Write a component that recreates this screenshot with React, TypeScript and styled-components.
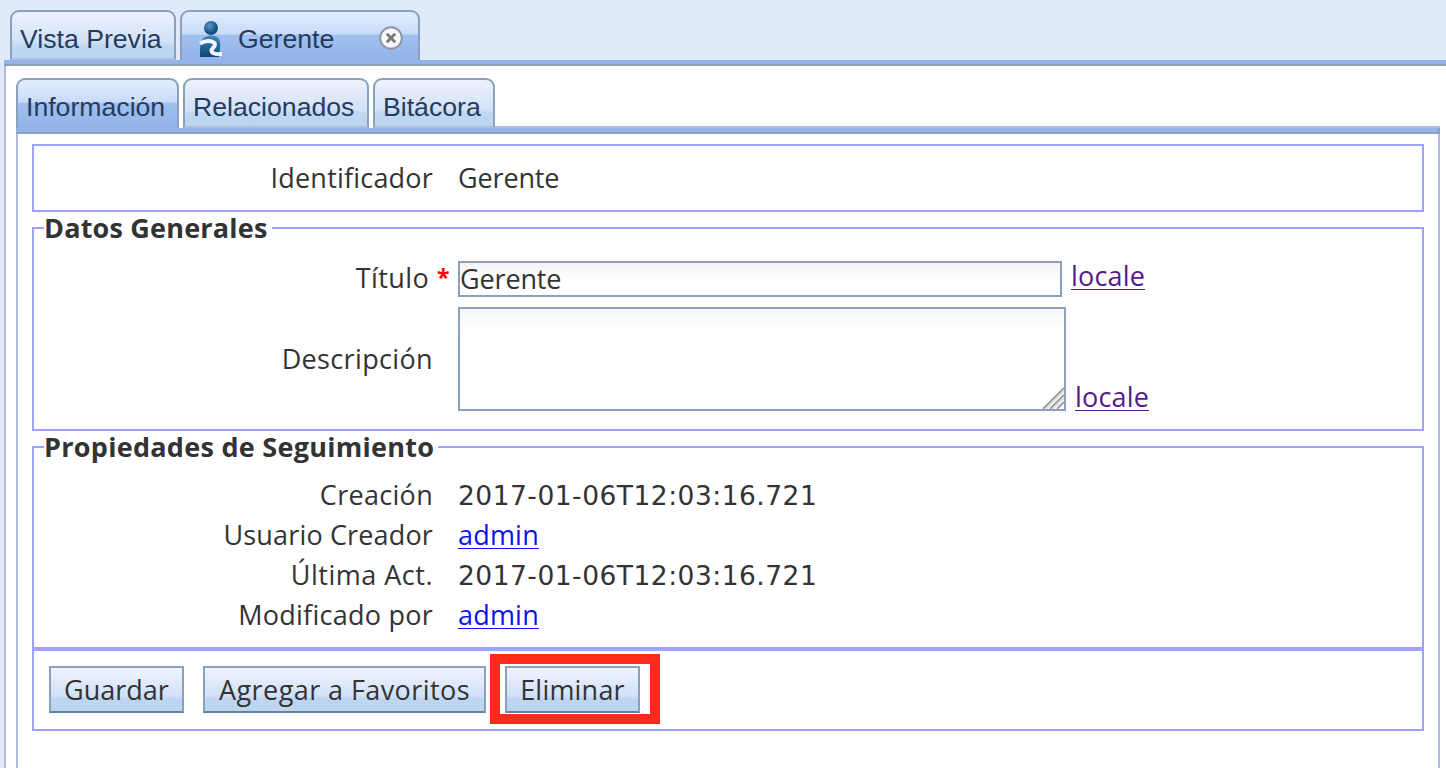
import React from "react";
import styled, { createGlobalStyle, css } from "styled-components";

const GlobalStyle = createGlobalStyle`
  html, body { margin: 0; padding: 0; }
  body {
    background: #e1eafb;
    color: #333;
    font-family: "Open Sans", "Noto Sans", sans-serif;
    font-size: 27px;
    line-height: 40px;
    overflow: hidden;
  }
  * { box-sizing: border-box; }
`;

const Page = styled.div`
  height: 768px;
  padding: 10px 0 0 4px;
  display: flex;
  flex-direction: column;
  overflow: hidden;
`;

const OuterTabs = styled.div`
  display: flex;
  gap: 4px;
  height: 50px;
  padding-left: 6px;
`;

const InnerTabs = styled.div`
  display: flex;
  gap: 4px;
  height: 50px;
`;

const Tab = styled.div<{ $active?: boolean; $width: number }>`
  display: flex;
  align-items: center;
  width: ${(p) => p.$width}px;
  height: 50px;
  padding: 7px 0 0 8px;
  border: 2px solid #8ba0bd;
  border-bottom: 2px solid #b0bbdf;
  border-radius: 9px 9px 0 0;
  background: linear-gradient(#edf2fe 0%, #d3e1f6 64%, #c0d8f0 72%, #b9d5ef 100%);
  color: #243c5f;
  font: 26.65px/34px "Liberation Sans", Arial, sans-serif;
  white-space: nowrap;
  ${(p) =>
    p.$active &&
    css`
      border-bottom: 0;
      padding-bottom: 2px;
      background: linear-gradient(#e3edfd 0%, #c8dbf9 46%, #a1c0ee 48%, #93b4ea 100%);
    `}
`;

const PersonIcon = styled.svg`
  margin: 0 15px 0 9px;
  flex: none;
`;

const CloseIcon = styled.svg`
  margin: -2px 0 0 44px;
  flex: none;
`;

const OuterPanel = styled.div`
  flex: 1;
  background: #fff;
  border-left: 2px solid #b0bbdf;
  padding: 12px 6px 0 10px;
  display: flex;
  flex-direction: column;
`;

const Strip = styled.div`
  flex: none;
  height: 6px;
  background: #94b3e6;
  border-bottom: 2px solid #8ba0bd;
`;

const InnerStrip = styled(Strip)`
  border-right: 2px solid #8ba0bd;
`;

const StripEdge = styled.div`
  flex: 1;
  margin-left: -4px;
  border-bottom: 2px solid #b0bbdf;
`;

const InnerPanel = styled.div`
  flex: 1;
  border: 2px solid #b0bbdf;
  border-width: 0 2px;
  padding: 10px 14px 0;
`;

const Group = styled.section<{ $height: number; $gap?: number; $pad?: number }>`
  height: ${(p) => p.$height}px;
  margin-top: ${(p) => p.$gap ?? 0}px;
  padding-top: ${(p) => p.$pad ?? 0}px;
  border: 2px solid #a0a0ff;
`;

const Legend = styled.h2<{ $width: number; $after: number; $ls: number }>`
  width: ${(p) => p.$width}px;
  height: 18px;
  margin: -10px 0 ${(p) => p.$after}px 10px;
  background: #fff;
  font-size: 27px;
  line-height: 18px;
  font-weight: 700;
  letter-spacing: ${(p) => p.$ls}px;
  white-space: nowrap;
`;

const Row = styled.div<{ $height?: number }>`
  display: flex;
  height: ${(p) => p.$height ?? 40}px;
  align-items: center;
`;

const Label = styled.label<{ $ls?: number; $required?: boolean }>`
  width: 424px;
  flex: none;
  padding-right: ${(p) => (p.$required ? 8 : 25)}px;
  text-align: right;
  letter-spacing: ${(p) => p.$ls ?? 0}px;
  ${(p) => p.$required && "margin-top: -2px;"}
`;

const Required = styled.em`
  color: #f00;
  font-style: normal;
  font-weight: 700;
  font-size: 23px;
  line-height: 20px;
  vertical-align: 2px;
  margin-left: 8px;
`;

const Value = styled.span`
  letter-spacing: -0.15px;
`;

const Timestamp = styled.time`
  padding-top: 2px;
  font-family: "DejaVu Sans", sans-serif;
  font-size: 26.5px;
  letter-spacing: 0.48px;
`;

const Link = styled.a`
  align-self: flex-start;
  height: 34px;
  line-height: 40px;
  color: #0b14ee;
  border-bottom: 1px solid currentColor;
  letter-spacing: 0.2px;
`;

const LocaleLink = styled(Link)`
  margin: 5px 0 0 9px;
  color: #551a8b;
`;

const LowerLocaleLink = styled(LocaleLink)`
  align-self: flex-end;
  margin-top: 0;
`;

const TextInput = styled.div`
  width: 604px;
  height: 36px;
  border: 2px solid #8ba0bd;
  background: linear-gradient(#f4f4f4, #fff 20px);
  line-height: 31px;
  letter-spacing: -0.15px;
`;

const TextArea = styled.div`
  display: flex;
  align-items: flex-end;
  justify-content: flex-end;
  width: 608px;
  height: 104px;
  border: 2px solid #8ba0bd;
  background: linear-gradient(#f5f5f5, #fff 22px);
`;

const Actions = styled(Group)`
  display: flex;
  align-items: flex-start;
  padding: 15px 0 0 15px;
`;

const Button = styled.button<{ $width: number; $ls?: number }>`
  width: ${(p) => p.$width}px;
  height: 47px;
  margin: 0 19px 0 0;
  padding: 0;
  border: 2px solid #8ba0bd;
  border-bottom-color: #6680a2;
  background: linear-gradient(#f1f4fe 0%, #d0e0f6 66%, #bcd5f0 72%, #bcd6f0 100%);
  color: #333;
  font: 27px/42px "Open Sans", "Noto Sans", sans-serif;
  letter-spacing: ${(p) => p.$ls ?? 0}px;
  white-space: nowrap;
`;

const Highlight = styled.div`
  width: 170px;
  height: 70px;
  margin: -12px 0 0 -15px;
  padding: 2px 0 0 5px;
  border: 10px solid #fd2a1d;
`;

export default function App() {
  return (
    <>
      <GlobalStyle />
      <Page>
        <OuterTabs>
          <Tab $width={166}>Vista Previa</Tab>
          <Tab $width={240} $active>
            <PersonIcon width="24" height="38" viewBox="0 0 24 38">
              <defs>
                <radialGradient id="head" cx="0.4" cy="0.35">
                  <stop offset="0" stopColor="#5e9ac8" />
                  <stop offset="1" stopColor="#145187" />
                </radialGradient>
                <linearGradient id="body" x2="0" y2="1">
                  <stop offset="0" stopColor="#4485b8" />
                  <stop offset="1" stopColor="#0c4676" />
                </linearGradient>
              </defs>
              <circle cx="12" cy="8" r="7" fill="url(#head)" />
              <path d="M6 17Q12 14 18 17Q22 19 21 28L20 37H1V30Q1 19 6 17Z" fill="url(#body)" />
              <path
                d="M1 23.5Q8 19.500 14 22Q18 24 14 28Q11 31 14 33Q17 34.500 23 34"
                fill="none"
                stroke="#f4f9ff"
                strokeWidth="4"
              />
            </PersonIcon>
            Gerente
            <CloseIcon width="26" height="26" viewBox="0 0 26 26">
              <circle cx="13" cy="13" r="10.8" fill="#f7f7f8" stroke="#9294a6" strokeWidth="2" />
              <path d="M8.8 8.8L17.2 17.2M17.2 8.8L8.8 17.2" stroke="#777" strokeWidth="2.8" />
            </CloseIcon>
          </Tab>
        </OuterTabs>
        <Strip />
        <OuterPanel>
          <InnerTabs>
            <Tab $width={163} $active>Información</Tab>
            <Tab $width={186}>Relacionados</Tab>
            <Tab $width={122}>Bitácora</Tab>
            <StripEdge />
          </InnerTabs>
          <InnerStrip />
          <InnerPanel>
            <Group $height={68} $pad={12}>
              <Row>
                <Label $ls={0.2}>Identificador</Label>
                <Value>Gerente</Value>
              </Row>
            </Group>
            <Group $height={204} $gap={15}>
              <Legend $width={228} $after={14} $ls={0.2}>Datos Generales</Legend>
              <Row $height={56}>
                <Label $required $ls={0.4}>
                  Título<Required>*</Required>
                </Label>
                <TextInput>Gerente</TextInput>
                <LocaleLink>locale</LocaleLink>
              </Row>
              <Row $height={104}>
                <Label $ls={0.35}>Descripción</Label>
                <TextArea>
                  <svg width="22" height="22" viewBox="0 0 22 22">
                    <path d="M1 22L22 1M8 22L22 8M15 22L22 15" stroke="#999" strokeWidth="1.8" />
                    <path d="M4 22L22 4M11 22L22 11" stroke="#d9d9d9" strokeWidth="1.5" />
                  </svg>
                </TextArea>
                <LowerLocaleLink>locale</LowerLocaleLink>
              </Row>
            </Group>
            <Group $height={203} $gap={15}>
              <Legend $width={394} $after={19} $ls={0.28}>Propiedades de Seguimiento</Legend>
              <Row>
                <Label $ls={0.3}>Creación</Label>
                <Timestamp>2017-01-06T12:03:16.721</Timestamp>
              </Row>
              <Row>
                <Label $ls={0.15}>Usuario Creador</Label>
                <Link>admin</Link>
              </Row>
              <Row>
                <Label $ls={0.5}>Última Act.</Label>
                <Timestamp>2017-01-06T12:03:16.721</Timestamp>
              </Row>
              <Row>
                <Label $ls={0.25}>Modificado por</Label>
                <Link>admin</Link>
              </Row>
            </Group>
            <Actions $height={82}>
              <Button $width={135}>Guardar</Button>
              <Button $width={283} $ls={0.42}>Agregar a Favoritos</Button>
              <Highlight>
                <Button $width={135} $ls={0.2}>Eliminar</Button>
              </Highlight>
            </Actions>
          </InnerPanel>
        </OuterPanel>
      </Page>
    </>
  );
}
